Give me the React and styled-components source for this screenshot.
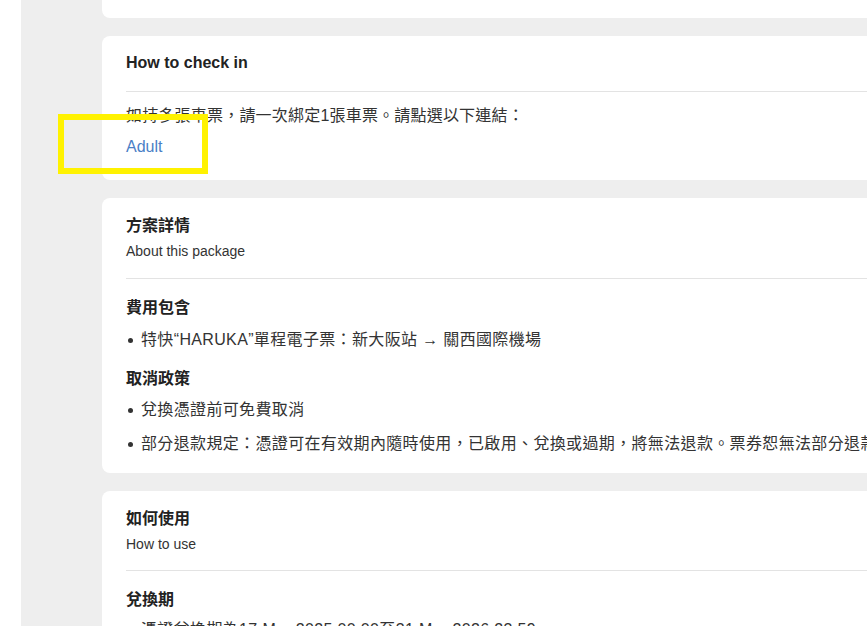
import styled, { createGlobalStyle } from "styled-components";

const GlobalStyle = createGlobalStyle`
  html, body {
    margin: 0;
    padding: 0;
    overflow: hidden;
    background: #ffffff;
  }
  body {
    font-family: "Liberation Sans", Arial, "Noto Sans CJK TC", sans-serif;
    color: #333333;
  }
`;

const Page = styled.div`
  position: relative;
  display: flex;
  width: 100vw;
  height: 100vh;
  overflow: hidden;
`;

const LeftStrip = styled.div`
  flex: 0 0 21px;
  background: #ffffff;
`;

const Main = styled.div`
  flex: 1;
  background: #eeeeee;
  padding-left: 81px;
  display: flex;
  flex-direction: column;
  gap: 18px;
  min-width: 0;
`;

const Card = styled.section`
  width: 900px;
  flex-shrink: 0;
  background: #ffffff;
  border-radius: 8px;
  box-sizing: border-box;
  padding: ${(p) => p.$pad || "16px 24px 17px"};
`;

const CutCard = styled.div`
  width: 900px;
  height: 18px;
  flex-shrink: 0;
  background: #ffffff;
  border-radius: 0 0 8px 8px;
`;

const Title = styled.h2`
  margin: 0;
  font-size: 16px;
  line-height: 24px;
  font-weight: 700;
  color: #222222;
`;

const Subtitle = styled.div`
  margin-top: 3px;
  font-size: 14px;
  line-height: 20px;
  color: #333333;
`;

const Divider = styled.hr`
  border: none;
  height: 1px;
  background: #e3e3e3;
  margin: ${(p) => p.$margin || "17px 0"};
`;

const Text = styled.p`
  margin: 0;
  font-size: 16px;
  line-height: 24px;
  letter-spacing: 0.2px;
`;

const Link = styled.a`
  display: block;
  margin-top: 7px;
  font-size: 16px;
  line-height: 24px;
  color: #4a80c6;
  text-decoration: none;
`;

const SectionHead = styled.h3`
  margin: ${(p) => p.$top || "0"} 0 0;
  font-size: 16px;
  line-height: 24px;
  font-weight: 700;
  color: #222222;
`;

const List = styled.ul`
  list-style: none;
  margin: 0;
  padding: 0;
`;

const Item = styled.li`
  position: relative;
  margin-top: ${(p) => p.$top || "8px"};
  padding-left: 15px;
  font-size: 16px;
  line-height: 24px;
  letter-spacing: 0.35px;
  white-space: nowrap;

  &::before {
    content: "";
    position: absolute;
    left: 2px;
    top: 10px;
    width: 5px;
    height: 5px;
    border-radius: 50%;
    background: #333333;
  }
`;

const Highlight = styled.div`
  position: absolute;
  left: 58px;
  top: 114px;
  width: 150px;
  height: 60px;
  box-sizing: border-box;
  border: 6px solid #fff200;
  pointer-events: none;
`;

export default function App() {
  return (
    <>
      <GlobalStyle />
      <Page>
        <LeftStrip />
        <Main>
          <CutCard />
          <Card $pad="15px 24px 21px">
            <Title>How to check in</Title>
            <Divider $margin="16px 0 12px" />
            <Text>如持多張車票，請一次綁定1張車票。請點選以下連結：</Text>
            <Link href="#">Adult</Link>
          </Card>
          <Card>
            <Title>方案詳情</Title>
            <Subtitle>About this package</Subtitle>
            <Divider />
            <SectionHead>費用包含</SectionHead>
            <List>
              <Item>特快“HARUKA”單程電子票：新大阪站 → 關西國際機場</Item>
            </List>
            <SectionHead $top="15px">取消政策</SectionHead>
            <List>
              <Item $top="7px">兌換憑證前可免費取消</Item>
              <Item $top="10px">
                部分退款規定：憑證可在有效期內隨時使用，已啟用、兌換或過期，將無法退款。票券恕無法部分退款。
              </Item>
            </List>
          </Card>
          <Card>
            <Title>如何使用</Title>
            <Subtitle>How to use</Subtitle>
            <Divider $margin="16px 0 17px" />
            <SectionHead>兌換期</SectionHead>
            <List>
              <Item $top="6px">憑證兌換期為17 Mar 2025 00:00至31 Mar 2026 23:59</Item>
            </List>
          </Card>
        </Main>
        <Highlight />
      </Page>
    </>
  );
}
